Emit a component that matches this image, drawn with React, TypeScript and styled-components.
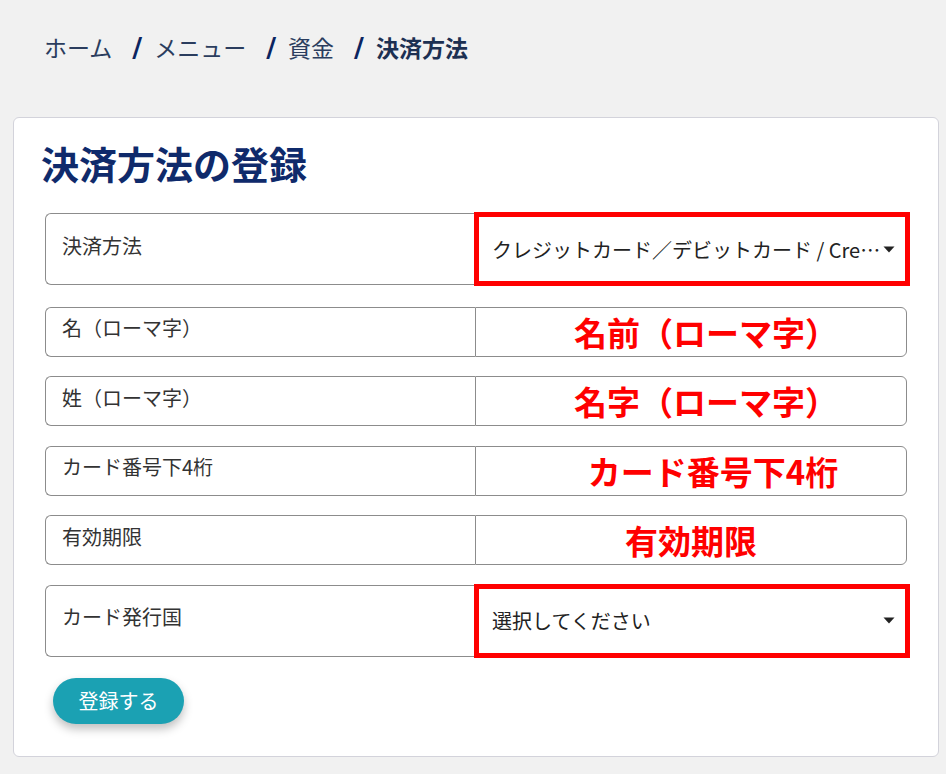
import styled, { createGlobalStyle } from 'styled-components';

type FieldRow = {
  label: string;
  kind: 'select' | 'text';
  value: string;
  tall?: boolean;
  nudge?: number;
};

const crumbs = ['ホーム', 'メニュー', '資金', '決済方法'];

// nudge: 赤字の注記は手で置かれているので少し右にずらす
const rows: FieldRow[] = [
  {
    label: '決済方法',
    kind: 'select',
    value: 'クレジットカード／デビットカード / Credit card / Debit card',
    tall: true,
  },
  { label: '名（ローマ字）', kind: 'text', value: '名前（ローマ字）', nudge: 30 },
  { label: '姓（ローマ字）', kind: 'text', value: '名字（ローマ字）', nudge: 30 },
  { label: 'カード番号下4桁', kind: 'text', value: 'カード番号下4桁', nudge: 44 },
  { label: '有効期限', kind: 'text', value: '有効期限' },
  { label: 'カード発行国', kind: 'select', value: '選択してください', tall: true },
];

const App = () => {
  return (
    <>
      <GlobalStyle />
      <Page>
        <Breadcrumb>
          {crumbs.map((crumb, i) => (
            <CrumbItem key={crumb}>
              {i > 0 && <Separator>/</Separator>}
              <Crumb $current={i === crumbs.length - 1}>{crumb}</Crumb>
            </CrumbItem>
          ))}
        </Breadcrumb>
        <Card>
          <Title>決済方法の登録</Title>
          <Form>
            {rows.map((row) => (
              <Row key={row.label} $tall={row.tall}>
                <Label>{row.label}</Label>
                {row.kind === 'select' ? (
                  <SelectBox>
                    <SelectText>{row.value}</SelectText>
                    <Caret width="12" height="7" viewBox="0 0 12 7">
                      <path d="M0.5 0.5h11L6 6.5z" fill="#222" />
                    </Caret>
                  </SelectBox>
                ) : (
                  <TextBox $nudge={row.nudge ?? 0}>{row.value}</TextBox>
                )}
              </Row>
            ))}
          </Form>
          <SubmitButton type="button">登録する</SubmitButton>
        </Card>
      </Page>
    </>
  );
};

const GlobalStyle = createGlobalStyle`
  html, body {
    margin: 0;
    padding: 0;
    background: #f1f1f1;
  }
  body {
    font-family: 'Noto Sans CJK JP', 'Noto Sans', 'Liberation Sans', sans-serif;
  }
  * {
    box-sizing: border-box;
  }
`;

const Page = styled.div`
  padding: 0 7px 17px 13px;
`;

const Breadcrumb = styled.nav`
  display: flex;
  align-items: center;
  height: 33px;
  margin-top: 31px;
  margin-bottom: 53px;
  padding-left: 31px;
  font-size: 23px;
  line-height: 33px;
`;

const CrumbItem = styled.span`
  display: inline-flex;
  align-items: center;
`;

const Separator = styled.span`
  margin: 0 12px 0 20px;
  font-family: 'DejaVu Sans', sans-serif;
  font-size: 27px;
  font-weight: 700;
  color: #0b2460;
`;

const Crumb = styled.span<{ $current?: boolean }>`
  color: ${({ $current }) => ($current ? '#1d3052' : '#2b3d5e')};
  font-weight: ${({ $current }) => ($current ? 700 : 400)};
`;

const Card = styled.section`
  background: #fff;
  border: 1px solid #d3d3db;
  border-radius: 6px;
  padding: 23px 31px 32px 31px;
`;

const Title = styled.h1`
  margin: 0 0 29px -4px;
  font-size: 38px;
  line-height: 43px;
  font-weight: 700;
  color: #0f2a6b;
`;

const Form = styled.div`
  display: flex;
  flex-direction: column;
  gap: 21.5px;
`;

const Row = styled.div<{ $tall?: boolean }>`
  display: grid;
  grid-template-columns: 430px 1fr;
  height: ${({ $tall }) => ($tall ? 72 : 48)}px;
`;

const Label = styled.div`
  display: flex;
  align-items: center;
  padding: 0 16px 8px;
  border: 1px solid #8c8c8c;
  border-right: none;
  border-radius: 6px 0 0 6px;
  font-size: 20px;
  color: #333;
`;

const TextBox = styled.div<{ $nudge: number }>`
  display: flex;
  align-items: center;
  justify-content: center;
  padding-left: ${({ $nudge }) => $nudge}px;
  border: 1px solid #8c8c8c;
  border-radius: 0 6px 6px 0;
  font-size: 33px;
  font-weight: 700;
  color: #f00;
  white-space: nowrap;
`;

const SelectBox = styled.div`
  display: flex;
  align-items: center;
  gap: 2px;
  margin: -1px -3px -1px -1px;
  padding: 0 10px 0 13px;
  border: 5px solid #f00;
  min-width: 0;
`;

const SelectText = styled.span`
  flex: 1;
  min-width: 0;
  overflow: hidden;
  white-space: nowrap;
  text-overflow: ellipsis;
  font-size: 20px;
  color: #222;
`;

const Caret = styled.svg`
  flex-shrink: 0;
`;

const SubmitButton = styled.button`
  display: block;
  margin: 21px 0 0 8px;
  width: 131px;
  height: 46px;
  border: none;
  border-radius: 23px;
  background: #1ba1b3;
  color: #fff;
  font-family: inherit;
  font-size: 20px;
  box-shadow: 0 5px 10px rgba(0, 0, 0, 0.25);
  cursor: pointer;
`;

export default App;
